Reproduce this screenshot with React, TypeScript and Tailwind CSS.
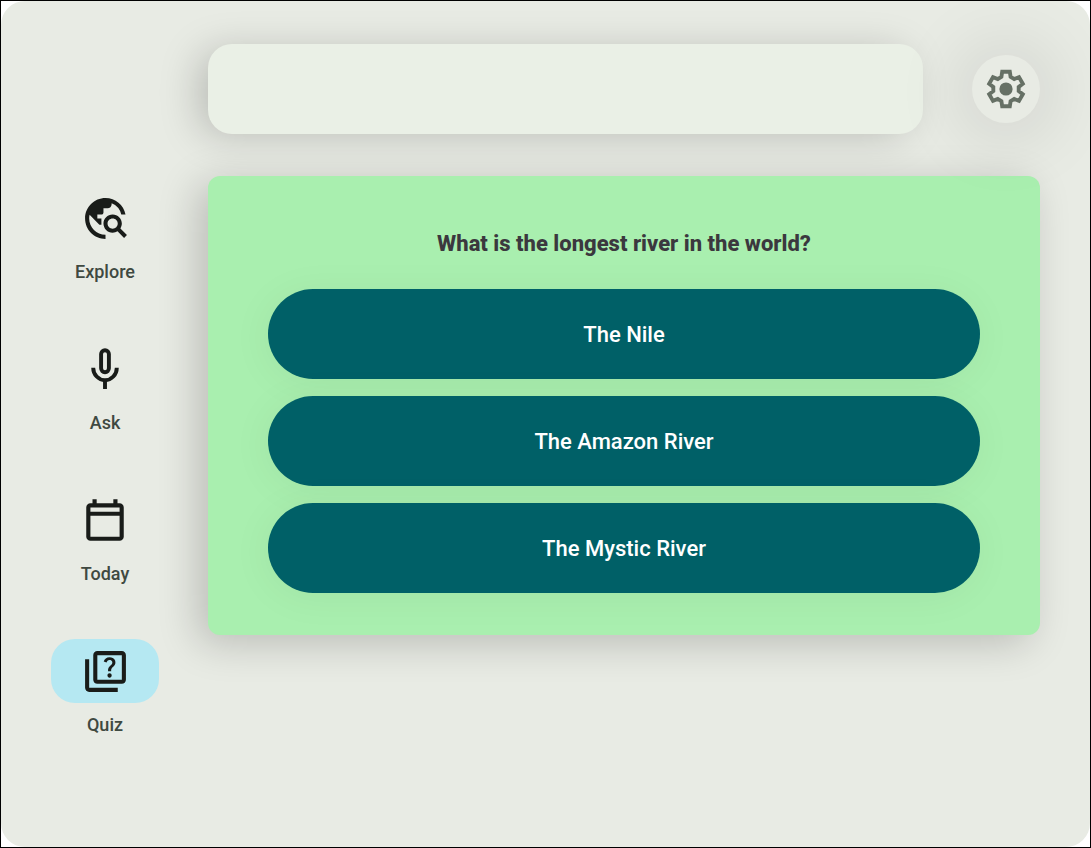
import type { ReactNode } from "react";
import { MdOutlineQuiz, MdTravelExplore } from "react-icons/md";

function MicIcon() {
  return (
    <svg viewBox="0 0 50 50" className="size-[50px]" fill="none" stroke="currentColor" strokeWidth="3.9" aria-hidden="true">
      <rect x="21.1" y="6.2" width="7.8" height="22" rx="3.9" />
      <path d="M13.2 23.7a11.8 12.5 0 0 0 23.6 0" />
      <path d="M25 36v9" />
    </svg>
  );
}

function CalendarIcon() {
  return (
    <svg viewBox="0 0 24 24" className="size-[50px]" fill="currentColor" aria-hidden="true">
      <path d="M5 22q-.825 0-1.413-.587T3 20V6q0-.825.588-1.412T5 4h1V2h2v2h8V2h2v2h1q.825 0 1.413.588T21 6v14q0 .825-.587 1.413T19 22zm0-2h14V10H5zM5 8h14V6H5z" />
    </svg>
  );
}

function GearIcon() {
  return (
    <svg viewBox="-20 -20 40 40" className="size-10" aria-hidden="true">
      <path
        d="M-3.8 -17.2H3.8L4.6 -12.1L8.2 -10L13 -11.9L16.8 -5.3L12.7 -2.1V2.1L16.8 5.3L13 11.9L8.2 10L4.6 12.1L3.8 17.2H-3.8L-4.6 12.1L-8.2 10L-13 11.9L-16.8 5.3L-12.7 2.1V-2.1L-16.8 -5.3L-13 -11.9L-8.2 -10L-4.6 -12.1Z"
        fill="none"
        stroke="currentColor"
        strokeWidth="3.9"
      />
      <circle r="6.6" fill="currentColor" />
    </svg>
  );
}

type NavItem = { label: string; icon: ReactNode; active?: boolean };

const navItems: NavItem[] = [
  { label: "Explore", icon: <MdTravelExplore size={49} aria-hidden="true" /> },
  { label: "Ask", icon: <MicIcon /> },
  { label: "Today", icon: <CalendarIcon /> },
  { label: "Quiz", icon: <MdOutlineQuiz size={49} aria-hidden="true" />, active: true },
];

const answers = ["The Nile", "The Amazon River", "The Mystic River"];

export default function App() {
  return (
    <div className="min-h-screen border border-black bg-white font-['Roboto',sans-serif] flex">
      <div className="flex flex-1 rounded-3xl bg-[#e8ebe4]">
        <nav aria-label="Main" className="w-[207px] shrink-0 pl-[50px] pt-[185px]">
          <ul className="flex w-[108px] flex-col gap-[53px]">
            {navItems.map((item) => (
              <li key={item.label}>
                <a
                  href={`#${item.label.toLowerCase()}`}
                  aria-current={item.active ? "page" : undefined}
                  className="flex flex-col items-center gap-2.5 text-[#191c19]"
                >
                  <span
                    className={`flex h-16 w-full items-center justify-center rounded-3xl ${item.active ? "bg-[#b5e8f2]" : ""}`}
                  >
                    {item.icon}
                  </span>
                  <span className="text-lg leading-6 font-medium text-[#3f4941]">{item.label}</span>
                </a>
              </li>
            ))}
          </ul>
        </nav>

        <main className="min-w-0 flex-1 pr-[50px] pt-[43px]">
          <header className="flex items-center gap-[49px]">
            <input
              type="text"
              aria-label="Search"
              className="h-[90px] min-w-0 flex-1 rounded-3xl bg-[#eaf0e6] px-6 text-[22px] text-[#3f4941] outline-none shadow-[-12px_4px_40px_-4px_rgba(0,0,0,0.21)]"
            />
            <button
              type="button"
              aria-label="Settings"
              className="flex size-[68px] shrink-0 items-center justify-center rounded-full bg-[#e8ebe4] text-[#667065] shadow-[0_3px_64px_20px_rgba(0,0,0,0.08)]"
            >
              <GearIcon />
            </button>
          </header>

          <section className="mt-[42px] rounded-xl bg-[#a9efaf] px-[60px] pt-[52px] pb-[42px] shadow-[-10px_8px_40px_rgba(0,0,0,0.2)]">
            <h1 className="text-center text-[22px] leading-8 font-extrabold text-[#3b383e]">
              What is the longest river in the world?
            </h1>
            <div className="mt-[29px] flex flex-col gap-[17px]">
              {answers.map((answer) => (
                <button
                  key={answer}
                  type="button"
                  className="h-[90px] rounded-full bg-[#006067] text-[22px] font-medium text-white shadow-[-2px_4px_40px_rgba(0,0,0,0.05)]"
                >
                  {answer}
                </button>
              ))}
            </div>
          </section>
        </main>
      </div>
    </div>
  );
}
